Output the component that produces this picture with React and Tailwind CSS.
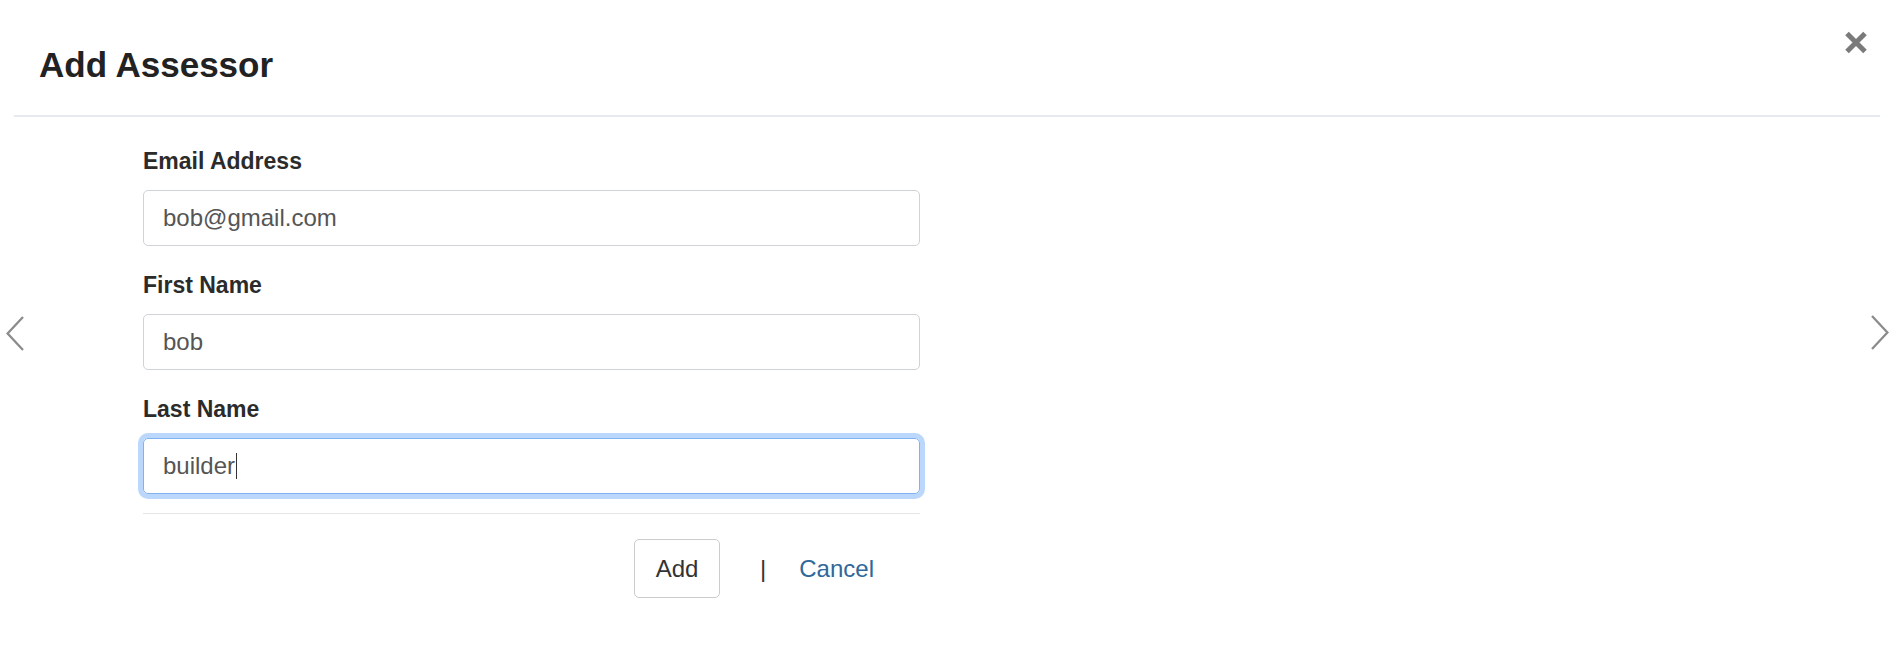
import React from "react";

function Chevron({ dir }) {
  return (
    <svg width="18" height="35" viewBox="0 0 18 35" fill="none">
      <path
        d={dir === "left" ? "M17 1 L1.6 17.5 L17 34" : "M1 1 L16.4 17.5 L1 34"}
        stroke="#8c8c8c"
        strokeWidth="2.3"
      />
    </svg>
  );
}

function Field({ label, value, focused }) {
  return (
    <div className="flex flex-col">
      <label className="text-[23px] leading-[33px] font-bold text-[#2b2b2b] mb-[12px]">{label}</label>
      <div
        className={
          "h-[56px] flex items-center pl-[19px] rounded-[5px] border text-[24px] text-[#555555] " +
          (focused
            ? "border-[#7fb2f0] shadow-[0_0_0_5px_#bbd8fc]"
            : "border-[#cfd3d8]")
        }
      >
        <span>{value}</span>
        {focused && <span className="inline-block w-[1px] h-[26px] bg-[#333] ml-[1px]" />}
      </div>
    </div>
  );
}

export default function App() {
  return (
    <div className="w-[1894px] h-[661px] bg-white overflow-hidden font-['Liberation_Sans',Arial,sans-serif]">
      <div className="mx-[14px] border-b-2 border-[#e6e9ed] flex justify-between items-start h-[117px]">
        <h4 className="pl-[25px] pt-[46px] text-[35px] leading-[38px] font-bold text-[#222]">Add Assessor</h4>
        <button className="mt-[31px] mr-[12px] w-[24px] h-[23px]">
          <svg width="24" height="23" viewBox="0 0 24 23">
            <path d="M3 2.5 L21 20.5 M21 2.5 L3 20.5" stroke="#7a7a7a" strokeWidth="5" />
          </svg>
        </button>
      </div>
      <div className="flex items-start">
        <div className="ml-[6px] mt-[199px]">
          <Chevron dir="left" />
        </div>
        <div className="ml-[119px] w-[777px] pt-[28px] flex flex-col">
          <div className="flex flex-col gap-[23px]">
            <Field label="Email Address" value="bob@gmail.com" />
            <Field label="First Name" value="bob" />
            <Field label="Last Name" value="builder" focused />
          </div>
          <div className="mt-[19px] border-t border-[#e5e5e5]" />
          <div className="mt-[25px] flex items-center justify-end pr-[46px]">
            <button className="h-[59px] w-[86px] border border-[#cccccc] rounded-[5px] text-[24px] text-[#333] bg-white">
              Add
            </button>
            <span className="ml-[40px] text-[24px] text-[#333]">|</span>
            <a className="ml-[33px] text-[24px] text-[#2f6899]">Cancel</a>
          </div>
        </div>
        <div className="flex-1" />
        <div className="mr-[5px] mt-[198px]">
          <Chevron dir="right" />
        </div>
      </div>
    </div>
  );
}
